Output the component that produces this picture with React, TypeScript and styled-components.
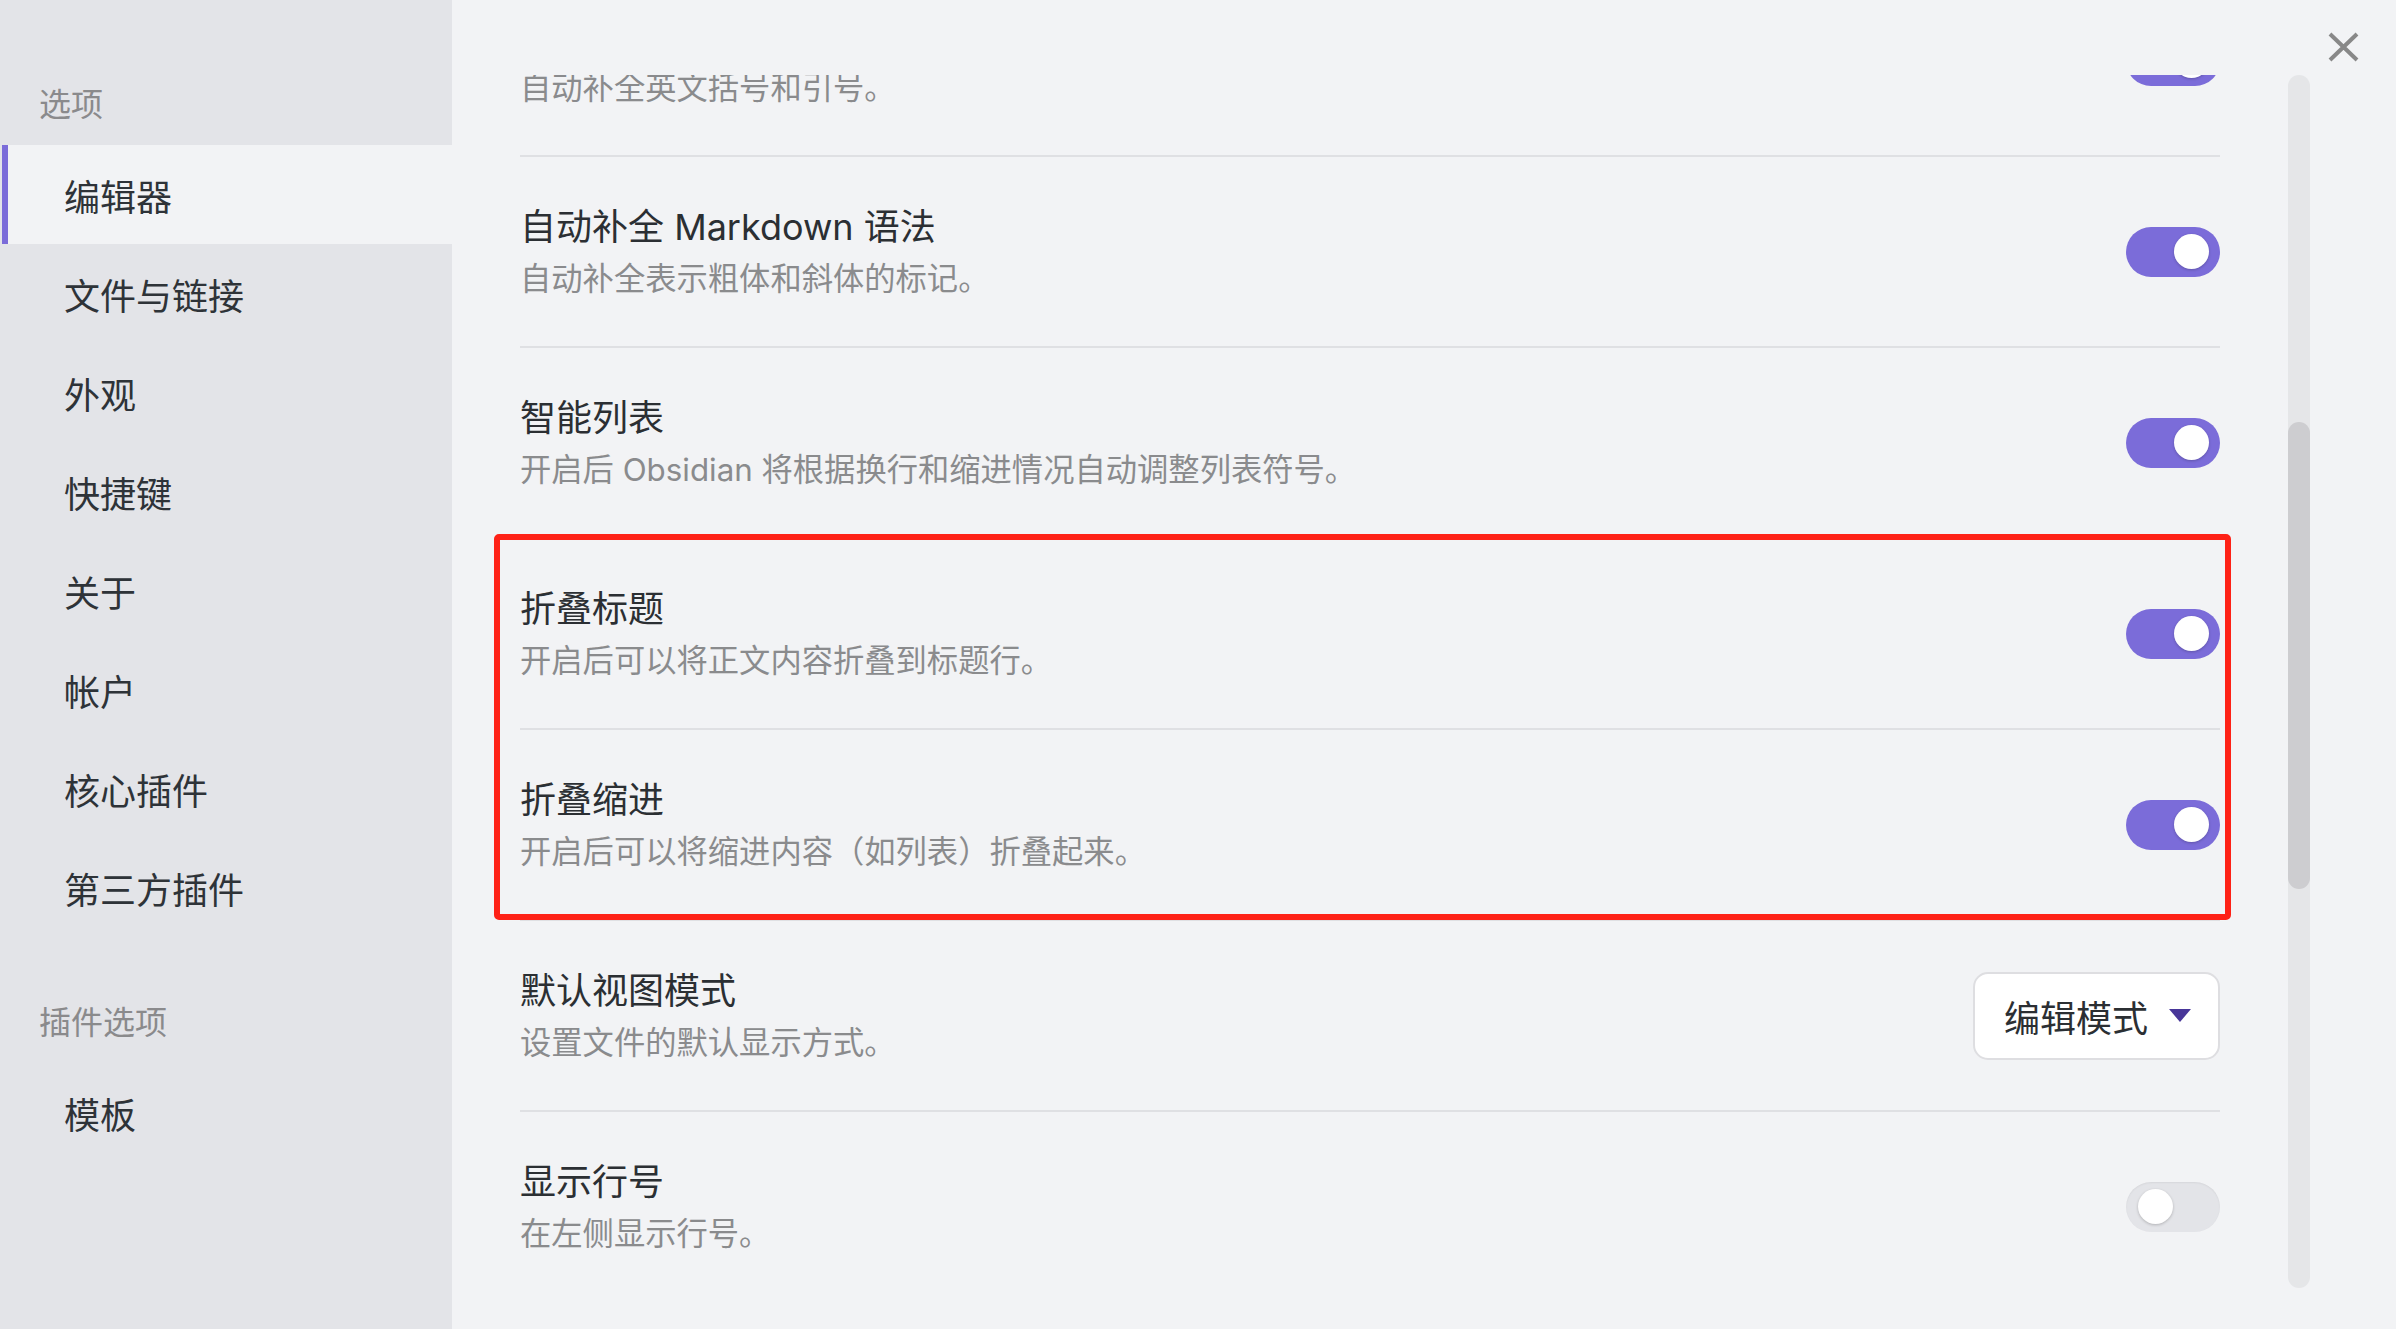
import React from 'react';
import styled, { createGlobalStyle } from 'styled-components';

const GlobalStyle = createGlobalStyle`
  html, body {
    margin: 0;
    padding: 0;
    background-color: #f2f3f5;
  }
  body {
    font-family: Inter, "Noto Sans CJK SC", "Noto Sans", sans-serif;
    color: #2b2f33;
  }
  * {
    box-sizing: border-box;
  }
`;

interface ActiveProps {
  active?: boolean;
}

interface ToggleProps {
  on: boolean;
}

const Modal = styled.div`
  display: flex;
  width: 2396px;
  height: 1329px;
  overflow: hidden;
  background-color: #f2f3f5;
`;

const Sidebar = styled.nav`
  display: flex;
  flex-direction: column;
  width: 452px;
  flex-shrink: 0;
  padding-left: 2px;
  background-color: #e3e4e8;
`;

const GroupTitle = styled.div<{ first?: boolean }>`
  margin-top: ${({ first }) => (first ? '83px' : '64px')};
  margin-bottom: 18px;
  padding-left: 37px;
  font-size: 32px;
  line-height: 44px;
  color: #8a8a8c;
`;

const NavItem = styled.div<ActiveProps>`
  display: flex;
  align-items: center;
  height: 99px;
  padding-left: 56px;
  border-left: 6px solid ${({ active }) => (active ? '#7b6cd9' : 'transparent')};
  background-color: ${({ active }) => (active ? '#f2f3f5' : 'transparent')};
  font-size: 36px;
  color: #2e3338;
  cursor: pointer;
`;

const Main = styled.main`
  position: relative;
  display: flex;
  flex: 1;
  gap: 68px;
  padding: 75px 86px 41px 68px;
`;

// clips only top and bottom, so the highlight frame can stick out sideways
const ScrollArea = styled.div`
  flex: 1;
  min-width: 0;
  clip-path: inset(0 -40px 0 -40px);
`;

const SettingList = styled.div`
  margin-top: -111px;
`;

const Row = styled.div`
  display: flex;
  align-items: center;
  justify-content: space-between;
  height: 191px;
  border-top: 2px solid #dfe0e3;

  &:first-child {
    border-top-color: transparent;
  }
`;

const Info = styled.div`
  display: flex;
  flex-direction: column;
  gap: 5px;
`;

const Name = styled.div`
  font-size: 36px;
  line-height: 50px;
  color: #2b2f33;
`;

const Desc = styled.div`
  font-size: 31.3px;
  line-height: 44px;
  color: #8a8b8d;
`;

const Highlight = styled.div`
  position: relative;

  &::after {
    content: '';
    position: absolute;
    top: -3px;
    bottom: -1px;
    left: -26px;
    right: -11px;
    border: 6px solid #fe2116;
    border-radius: 5px;
    pointer-events: none;
  }
`;

const Toggle = styled.div<ToggleProps>`
  position: relative;
  width: 94px;
  height: 50px;
  flex-shrink: 0;
  border-radius: 25px;
  background-color: ${({ on }) => (on ? '#7b6cd9' : '#e3e4e8')};
  box-shadow: ${({ on }) => (on ? 'none' : 'inset 0 1px 2px rgba(0, 0, 0, 0.06)')};
  cursor: pointer;
`;

const Knob = styled.span<ToggleProps>`
  position: absolute;
  top: 7px;
  left: ${({ on }) => (on ? '48px' : '12px')};
  width: 35px;
  height: 35px;
  border-radius: 50%;
  background-color: #fff;
  box-shadow: 0 1px 3px rgba(0, 0, 0, 0.22);
`;

const Dropdown = styled.div`
  display: flex;
  align-items: center;
  gap: 21px;
  height: 88px;
  padding: 0 27px 0 29px;
  border: 2px solid #dedee1;
  border-radius: 15px;
  background-color: #fff;
  font-size: 36px;
  white-space: nowrap;
  color: #2b2f33;
  cursor: pointer;
`;

const Caret = styled.span`
  width: 0;
  height: 0;
  border-left: 11px solid transparent;
  border-right: 11px solid transparent;
  border-top: 13px solid #483699;
`;

const ScrollTrack = styled.div`
  width: 22px;
  flex-shrink: 0;
  border-radius: 11px;
  background-color: #e5e6e8;
`;

const ScrollThumb = styled.div`
  margin-top: 347px;
  height: 467px;
  border-radius: 11px;
  background-color: #cdcdd0;
`;

const CloseButton = styled.button`
  position: absolute;
  top: 32px;
  right: 37px;
  width: 31px;
  height: 30px;
  padding: 0;
  border: none;
  background: none;
  cursor: pointer;
`;

const optionItems = ['编辑器', '文件与链接', '外观', '快捷键', '关于', '帐户', '核心插件', '第三方插件'];
const pluginItems = ['模板'];

type Control = { kind: 'toggle'; on: boolean } | { kind: 'select'; value: string };

interface Setting {
  name: string;
  desc: string;
  control: Control;
}

const before: Setting[] = [
  { name: '自动配对括号', desc: '自动补全英文括号和引号。', control: { kind: 'toggle', on: true } },
  { name: '自动补全 Markdown 语法', desc: '自动补全表示粗体和斜体的标记。', control: { kind: 'toggle', on: true } },
  { name: '智能列表', desc: '开启后 Obsidian 将根据换行和缩进情况自动调整列表符号。', control: { kind: 'toggle', on: true } },
];

const folding: Setting[] = [
  { name: '折叠标题', desc: '开启后可以将正文内容折叠到标题行。', control: { kind: 'toggle', on: true } },
  { name: '折叠缩进', desc: '开启后可以将缩进内容（如列表）折叠起来。', control: { kind: 'toggle', on: true } },
];

const after: Setting[] = [
  { name: '默认视图模式', desc: '设置文件的默认显示方式。', control: { kind: 'select', value: '编辑模式' } },
  { name: '显示行号', desc: '在左侧显示行号。', control: { kind: 'toggle', on: false } },
];

const SettingRow = ({ setting }: { setting: Setting }) => (
  <Row>
    <Info>
      <Name>{setting.name}</Name>
      <Desc>{setting.desc}</Desc>
    </Info>
    {setting.control.kind === 'toggle' ? (
      <Toggle on={setting.control.on}>
        <Knob on={setting.control.on} />
      </Toggle>
    ) : (
      <Dropdown>
        <span>{setting.control.value}</span>
        <Caret />
      </Dropdown>
    )}
  </Row>
);

const App = () => {
  return (
    <>
      <GlobalStyle />
      <Modal>
        <Sidebar>
          <GroupTitle first>选项</GroupTitle>
          {optionItems.map((item, i) => (
            <NavItem key={item} active={i === 0}>{item}</NavItem>
          ))}
          <GroupTitle>插件选项</GroupTitle>
          {pluginItems.map(item => (
            <NavItem key={item}>{item}</NavItem>
          ))}
        </Sidebar>
        <Main>
          <ScrollArea>
            <SettingList>
              {before.map(s => <SettingRow key={s.name} setting={s} />)}
              <Highlight>
                {folding.map(s => <SettingRow key={s.name} setting={s} />)}
              </Highlight>
              {after.map(s => <SettingRow key={s.name} setting={s} />)}
            </SettingList>
          </ScrollArea>
          <ScrollTrack>
            <ScrollThumb />
          </ScrollTrack>
          <CloseButton aria-label="关闭">
            <svg width="31" height="30" viewBox="0 0 31 30">
              <path d="M2 2 L29 28 M29 2 L2 28" stroke="#888888" strokeWidth="4" fill="none" />
            </svg>
          </CloseButton>
        </Main>
      </Modal>
    </>
  );
};

export default App;
